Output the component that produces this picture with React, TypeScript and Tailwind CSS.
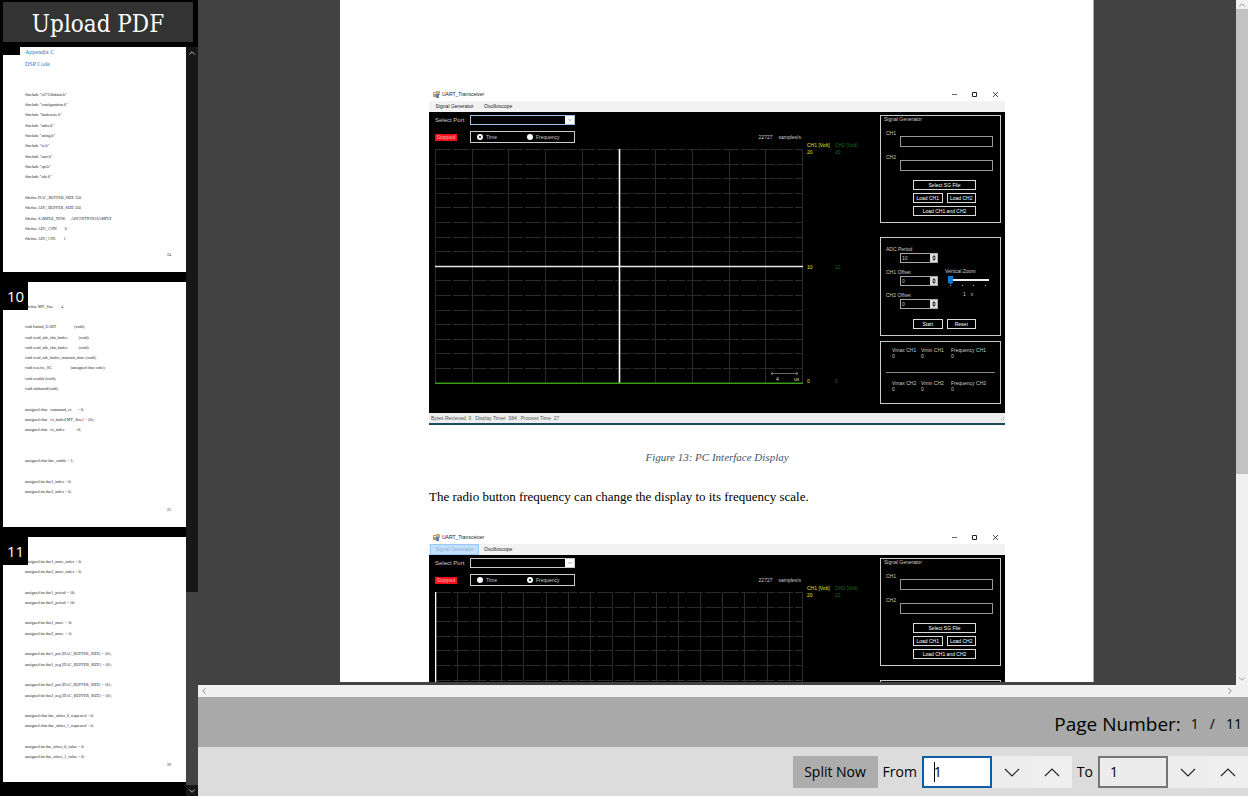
import { useId } from "react";
import { ChevronDown, ChevronUp, ChevronLeft, ChevronRight } from "lucide-react";

const page9 = [
  '#include "c6713dskinit.h"',
  '#include "configuration.h"',
  '#include "buffersize.h"',
  '#include "stdio.h"',
  '#include "string.h"',
  '#include "io.h"',
  '#include "uart.h"',
  '#include "spi.h"',
  '#include "adc.h"',
  "",
  "#define DAC_BUFFER_SIZE 350",
  "#define ADC_BUFFER_SIZE 350",
  "#define SAMPLE_NOW      ADCOPTION1SAMPLY",
  "#define ADC_CHN        0",
  "#define ADC_CH1        1",
];

const page10 = [
  "#define MY_Size        4",
  "",
  "void Initiad_UART                  (void);",
  "void send_adc_chn_buffer           (void);",
  "void send_adc_chn_buffer           (void);",
  "void send_adc_buffer_transmit_done (void);",
  "void receive_SG                   (unsigned char code);",
  "void sendch (void);",
  "void initboard(void);",
  "",
  "unsigned char   command_rx      = 0;",
  "unsigned char   rx_buffer[MY_Size] = {0};",
  "unsigned char   rx_index           =0;",
  "",
  "",
  "unsigned char dac_enable = 1;",
  "",
  "unsigned int dac1_index = 0;",
  "unsigned int dac2_index = 0;",
  "",
];

const page11 = [
  "unsigned int dac1_more_index = 0;",
  "unsigned int dac2_more_index = 0;",
  "",
  "unsigned int dac1_period = 10;",
  "unsigned int dac2_period = 10;",
  "",
  "unsigned int dac1_more  = 0;",
  "unsigned int dac2_more  = 0;",
  "",
  "unsigned int dac1_pos [DAC_BUFFER_SIZE] = {0};",
  "unsigned int dac1_neg [DAC_BUFFER_SIZE] = {0};",
  "",
  "unsigned int dac2_pos [DAC_BUFFER_SIZE] = {0};",
  "unsigned int dac2_neg [DAC_BUFFER_SIZE] = {0};",
  "",
  "unsigned char dac_offset_0_requested = 0;",
  "unsigned char dac_offset_1_requested = 0;",
  "",
  "unsigned int dac_offset_0_value = 0;",
  "unsigned int dac_offset_1_value = 0;",
];

const ui = "font-['Open_Sans','Noto_Sans',sans-serif]";

function CodeLines({ lines }: { lines: string[] }) {
  return (
    <>
      {lines.map((line, i) => (
        <div key={i} className="flex items-center whitespace-pre">
          {line}
        </div>
      ))}
    </>
  );
}

function Thumbnail({ number, lines, footer }: { number: number; lines: string[]; footer: string }) {
  const first = number === 9;
  return (
    <li className="relative flex h-[245px] flex-col bg-white font-['Liberation_Sans_Narrow','Liberation_Serif',serif] text-[4px] leading-[5px] text-[#222]">
      <span className={`absolute left-0 top-0 flex h-7 items-center bg-black px-1 text-[15px] text-white ${ui}`}>
        {number}
      </span>
      {first ? (
        <>
          <div className="ml-[22px] mt-[22px] text-[6px] leading-[6px] text-[#2e74b5]">Appendix C</div>
          <div className="ml-[22px] mt-[6px] text-[6px] leading-[6px] text-[#2e74b5]">DSP Code</div>
          <div className="ml-[22px] mt-[22px] grid h-[155px] auto-rows-fr">
            <CodeLines lines={lines} />
          </div>
        </>
      ) : (
        <div className="ml-[22px] mt-[19px] grid h-[206px] auto-rows-fr">
          <CodeLines lines={lines} />
        </div>
      )}
      <div className="absolute bottom-[15px] right-[15px]">{footer}</div>
    </li>
  );
}

function Sidebar() {
  return (
    <aside className="flex w-[198px] shrink-0 flex-col bg-black">
      <button className="ml-[3px] mr-[5px] mt-[2px] h-10 bg-[#333] pt-1 font-['DejaVu_Serif_Condensed','DejaVu_Serif',serif] text-[24px] leading-none text-white">
        Upload PDF
      </button>
      <div className="mt-[5px] flex min-h-0 flex-1">
        <div className="min-h-0 flex-1 overflow-hidden pl-[3px]">
          <ul className="-mt-5 flex flex-col gap-[10px]">
            <Thumbnail number={9} lines={page9} footer="24" />
            <Thumbnail number={10} lines={page10} footer="25" />
            <Thumbnail number={11} lines={page11} footer="26" />
          </ul>
        </div>
        <div className="flex w-3 flex-col bg-[#171717] text-[#ddd]">
          <button aria-label="Scroll thumbnails up" className="flex h-3 items-center justify-center">
            <ChevronUp size={10} />
          </button>
          <div className="flex-1" />
          <div className="h-[193px] bg-[#434343]" />
          <button aria-label="Scroll thumbnails down" className="flex h-[11px] items-center justify-center">
            <ChevronDown size={10} />
          </button>
        </div>
      </div>
    </aside>
  );
}

function Graph({ frequency }: { frequency: boolean }) {
  const step = frequency ? 22.1 : 36.7;
  const columns = frequency ? 17 : 10;
  const xs = Array.from({ length: columns }, (_, i) => Math.round(i * step) + 0.5);
  const ys = Array.from({ length: 16 }, (_, i) => Math.round(i * 14.6) + 0.5);
  return (
    <svg className="mt-[6px] block h-[235px] w-full" viewBox="0 0 368 235" preserveAspectRatio="none">
      <g stroke="#2b2b2b" fill="none">
        {xs.map((x) => (
          <path key={x} d={`M${x} 0V234`} />
        ))}
        <path d="M367.5 0V234" />
      </g>
      <g stroke="#2b2b2b" fill="none" strokeDasharray="16 2">
        {ys.map((y) => (
          <path key={y} d={`M0 ${y}H368`} />
        ))}
      </g>
      {!frequency && <path d="M0 117.5H368" stroke="#e8e8e8" strokeWidth="1.4" />}
      <path d={frequency ? "M0.5 0V234" : "M184.5 0V234"} stroke="#fff" strokeWidth="1.6" />
      <path d="M0 234.3H368" stroke="#3f9a1c" strokeWidth="1.4" />
      <g stroke="#aaa" strokeWidth=".6" fill="none">
        <path d="M336 224.5H363M338 223L336 224.5L338 226M361 223L363 224.5L361 226" />
      </g>
      <g fill="#ddd" fontSize="5" fontFamily="Liberation Sans, sans-serif">
        <text x="341" y="232">4</text>
        <text x="359" y="232">us</text>
      </g>
    </svg>
  );
}

function VoltScale({ name, className }: { name: string; className: string }) {
  return (
    <div className={`w-7 leading-[7px] ${className}`}>
      <div className="whitespace-nowrap">{name} [Volt]</div>
      <div className="flex h-[236px] flex-col justify-between">
        <span>20</span>
        <span>10</span>
        <span>0</span>
      </div>
    </div>
  );
}

function FileField({ label, className }: { label: string; className: string }) {
  const id = useId();
  return (
    <div className={`flex flex-col ${className}`}>
      <label htmlFor={id} className="ml-[5px] h-[6px] leading-[6px]">
        {label}
      </label>
      <input id={id} className="ml-[19px] mr-[7px] h-[11px] border border-[#999] bg-black px-px" />
    </div>
  );
}

function Spinner({ label, value }: { label: string; value: string }) {
  const id = useId();
  return (
    <div className="flex h-[17px] flex-col">
      <label htmlFor={id} className="h-[7px] whitespace-nowrap leading-[6px]">
        {label}
      </label>
      <div className="ml-[14px] flex h-[10px] w-[38px] border border-[#aaa]">
        <input id={id} defaultValue={value} className="w-full min-w-0 bg-black pl-px text-[5px] leading-none" />
        <div className="flex w-[7px] shrink-0 flex-col items-center justify-center bg-[#ddd]">
          <svg className="h-[6px] w-1" viewBox="0 0 4 6">
            <path d="M0 2.4L2 0L4 2.4ZM0 3.6L2 6L4 3.6Z" fill="#333" />
          </svg>
        </div>
      </div>
    </div>
  );
}

const toolButton = "h-[10px] border border-[#ddd] text-[5px] leading-none whitespace-nowrap";

function ControlPanels() {
  const zoomId = useId();
  return (
    <div className="flex w-[121px] shrink-0 flex-col text-[#ccc]">
      <section className="flex h-[108px] flex-col border border-[#ccc]">
        <h3 className="ml-[3px] leading-[7px]">Signal Generator</h3>
        <FileField label="CH1" className="mt-[7px]" />
        <FileField label="CH2" className="mt-[7px]" />
        <div className="ml-8 mt-[9px] grid w-[63px] grid-cols-2 gap-x-1 gap-y-[3px] text-white">
          <button className={`col-span-2 ${toolButton}`}>Select SG File</button>
          <button className={toolButton}>Load CH1</button>
          <button className={toolButton}>Load CH2</button>
          <button className={`col-span-2 ${toolButton}`}>Load CH1 and CH2</button>
        </div>
      </section>
      <section className="mt-[14px] flex h-[99px] flex-col border border-[#ccc]">
        <div className="ml-[5px] mt-2 flex">
          <div className="flex w-[59px] flex-col gap-[6px]">
            <Spinner label="ADC Period" value="10" />
            <Spinner label="CH1 Offset" value="0" />
            <Spinner label="CH2 Offset" value="0" />
          </div>
          <div className="flex flex-col pt-[22px]">
            <label htmlFor={zoomId} className="leading-[7px]">
              Vertical Zoom
            </label>
            <input
              id={zoomId}
              type="range"
              min="1"
              max="4"
              defaultValue="1"
              className="ml-[3px] mt-px h-2 w-[41px] appearance-none bg-[linear-gradient(#eee,#eee)] bg-[length:100%_2px] bg-center bg-no-repeat [&::-webkit-slider-thumb]:h-2 [&::-webkit-slider-thumb]:w-[5px] [&::-webkit-slider-thumb]:appearance-none [&::-webkit-slider-thumb]:rounded-b-sm [&::-webkit-slider-thumb]:bg-[#0a7ad8]"
            />
            <div className="ml-[5px] mt-px flex w-9 justify-between">
              <i className="h-px w-px bg-[#999]" />
              <i className="h-px w-px bg-[#999]" />
              <i className="h-px w-px bg-[#999]" />
              <i className="h-px w-px bg-[#999]" />
            </div>
            <div className="ml-[18px] mt-[5px] flex gap-[5px] leading-[7px]">
              <span>1</span>
              <span>x</span>
            </div>
          </div>
        </div>
        <div className="ml-8 mt-auto mb-[6px] grid w-[63px] grid-cols-2 gap-x-1 text-white">
          <button className={toolButton}>Start</button>
          <button className={toolButton}>Reset</button>
        </div>
      </section>
      <section className="mt-[5px] flex h-[63px] flex-col justify-between border border-[#ccc] px-[5px] pb-[11px] pt-[5px] leading-[6px]">
        <Measures channel="CH1" />
        <hr className="mt-[6px] border-[#888]" />
        <Measures channel="CH2" />
      </section>
    </div>
  );
}

function Measures({ channel }: { channel: string }) {
  return (
    <dl className="grid grid-cols-[29px_30px_1fr] whitespace-nowrap pl-[6px]">
      {["Vmax", "Vmin", "Frequency"].map((name) => (
        <div key={name}>
          <dt>
            {name} {channel}
          </dt>
          <dd>0</dd>
        </div>
      ))}
    </dl>
  );
}

function Transceiver({ frequency = false }: { frequency?: boolean }) {
  const id = useId();
  const radio =
    "size-[6px] appearance-none rounded-full bg-white checked:border-2 checked:border-white checked:bg-black";
  return (
    <figure className="font-['Liberation_Sans',sans-serif] text-[5px] leading-[7px]">
      <div className="flex h-[13px] items-center bg-white pb-px pl-1 pr-[6px] text-[#222]">
        <svg className="mr-[2px] h-[7px] w-[7px]" viewBox="0 0 7 7">
          <path d="M0 1H4V6H0Z" fill="#d9904a" />
          <path d="M3 0H7V4H3Z" fill="#c9b072" />
          <path d="M3 3H6V7H3Z" fill="#5b82bd" />
          <path d="M1 2H3V3H1Z" fill="#fff" />
        </svg>
        <span>UART_Transceiver</span>
        <svg className="ml-auto h-[7px] w-[47px]" viewBox="0 0 47 7" fill="none" stroke="#222">
          <path d="M0 3.5H5" strokeWidth=".7" />
          <path d="M20.5 1.5H24.5V5.5H20.5Z" />
          <path d="M41 1L46 6M46 1L41 6" strokeWidth=".8" />
        </svg>
      </div>
      <div className="flex h-[11px] items-center bg-[#f2f2f2] pl-px text-[#222]">
        <span
          className={`flex w-[49px] justify-center ${
            frequency ? "border border-[#9ac8f4] bg-[#c2e0fb] py-px text-[#8fb0d0]" : ""
          }`}
        >
          Signal Generator
        </span>
        <span className="ml-[5px]">Oscilloscope</span>
      </div>
      <div className="flex h-[301px] bg-black pl-[6px] pr-1 pt-[3px]">
        <div className="flex min-w-0 flex-1 flex-col text-[#ccc]">
          <div className="flex h-[10px] items-center">
            <label htmlFor={id + "port"} className="w-[35px] whitespace-nowrap text-[6px]">
              Select Port
            </label>
            <div className={`flex h-full w-[105px] border ${frequency ? "border-[#ccc]" : "border-[#a4c3e8]"}`}>
              <select id={id + "port"} className="min-w-0 flex-1 appearance-none bg-black">
                <option></option>
              </select>
              <span className="flex w-[9px] items-center justify-center bg-white">
                <ChevronDown size={6} className="text-[#555]" />
              </span>
            </div>
          </div>
          <div className="mt-[6px] flex h-3 items-center">
            <span className="mr-[13px] flex h-[7px] w-[22px] items-center justify-center bg-[#f3101c] text-[#ffb0a8]">
              Stopped
            </span>
            <div className="flex h-full w-[105px] items-center border border-[#ccc] pl-[6px]">
              <label className="flex w-[50px] items-center gap-[3px]">
                <input type="radio" name={id + "mode"} defaultChecked={!frequency} className={radio} />
                Time
              </label>
              <label className="flex items-center gap-[3px]">
                <input type="radio" name={id + "mode"} defaultChecked={frequency} className={radio} />
                Frequency
              </label>
            </div>
            <span className="ml-auto mr-[6px]">22727</span>
            <span className="mr-[2px]">samples/s</span>
          </div>
          <Graph frequency={frequency} />
        </div>
        <div className="flex w-[77px] shrink-0 pl-1 pt-[27px]">
          <VoltScale name="CH1" className="text-[#e6e020]" />
          <VoltScale name="CH2" className="text-[#16701c]" />
        </div>
        <ControlPanels />
      </div>
      <div className="flex h-3 items-center gap-1 whitespace-pre border-b-2 border-[#1d4a63] bg-[#eee] pl-[2px] text-[#555]">
        <span>Bytes Recieved  0</span>
        <span>Display Timer  384</span>
        <span>Process Time  27</span>
        <svg className="ml-auto h-1 w-1" viewBox="0 0 4 4" fill="#aaa">
          <path d="M0 3H1V4H0ZM2 3H3V4H2ZM2 1H3V2H2Z" />
        </svg>
      </div>
    </figure>
  );
}

function DocumentView() {
  return (
    <main className="flex min-h-0 flex-1">
      <div className="flex min-w-0 flex-1 flex-col">
        <div className="flex min-h-0 flex-1 justify-center bg-[#424242] pb-[3px]">
          <article className="w-[754px] overflow-hidden border-r border-[#aaa] bg-white px-[88px] pt-[88px] font-['Liberation_Serif',serif]">
            <div className="pl-px">
              <Transceiver />
              <p className="mt-6 text-center text-[11px] italic leading-4 text-[#44546a]">
                Figure 13: PC Interface Display
              </p>
              <p className="mt-[22px] text-[13px] leading-5 text-black">
                The radio button frequency can change the display to its frequency scale.
              </p>
              <div className="mt-6">
                <Transceiver frequency />
              </div>
            </div>
          </article>
        </div>
        <div className="flex h-3 items-center justify-between bg-[#f0f0f0] text-[#777]">
          <button aria-label="Scroll left" className="flex w-3 justify-center">
            <ChevronLeft size={10} />
          </button>
          <button aria-label="Scroll right" className="flex w-3 justify-center">
            <ChevronRight size={10} />
          </button>
        </div>
      </div>
      <div className="flex w-3 shrink-0 flex-col bg-[#f0f0f0] pb-3 text-[#888]">
        <button aria-label="Scroll up" className="flex h-[9px] items-center justify-center">
          <ChevronUp size={10} />
        </button>
        <div className="h-[465px] bg-[#c2c2c2]" />
        <div className="flex-1" />
        <button aria-label="Scroll down" className="flex h-3 items-center justify-center">
          <ChevronDown size={10} />
        </button>
      </div>
    </main>
  );
}

function RangeField({ label, active = false }: { label: string; active?: boolean }) {
  const id = useId();
  return (
    <div className="flex items-center">
      <label htmlFor={id} className="mx-[5px]">
        {label}
      </label>
      <div className="relative">
        <input
          id={id}
          defaultValue="1"
          inputMode="numeric"
          className={`block h-8 w-[70px] border-2 pl-[10px] outline-none ${
            active ? "border-[#0a5fa6] bg-white" : "border-[#767676] bg-[#ececec]"
          }`}
        />
        {active && <span className="absolute left-3 top-[6px] h-5 w-px bg-black" />}
      </div>
      <button aria-label={`Decrease ${label}`} className="flex h-8 w-10 items-center justify-center bg-[#ededed]">
        <ChevronGlyph d="M1 5L8 12L15 5" />
      </button>
      <button aria-label={`Increase ${label}`} className="flex h-8 w-10 items-center justify-center bg-[#efefef]">
        <ChevronGlyph d="M1 12L8 5L15 12" />
      </button>
    </div>
  );
}

function ChevronGlyph({ d }: { d: string }) {
  return (
    <svg className="size-4" viewBox="0 0 16 16" fill="none" stroke="#222" strokeWidth="1.1">
      <path d={d} />
    </svg>
  );
}

export default function App() {
  return (
    <div className={`flex h-screen overflow-hidden text-black ${ui}`}>
      <Sidebar />
      <div className="flex min-w-0 flex-1 flex-col">
        <DocumentView />
        <div className="flex h-[50px] shrink-0 items-center justify-end bg-[#a9a9a9] pr-[6px] pt-1">
          <span className="mr-[10px] text-[19px]">Page Number:</span>
          <span className="flex gap-[11px] pb-[2px] text-[14px]">
            <span>1</span>
            <span>/</span>
            <span>11</span>
          </span>
        </div>
        <form
          onSubmit={(e) => e.preventDefault()}
          className="flex h-[49px] shrink-0 items-center justify-end bg-[#dcdcdc] text-[14px]"
        >
          <button className="h-8 w-[85px] bg-[#adadad]">Split Now</button>
          <RangeField label="From" active />
          <RangeField label="To" />
        </form>
      </div>
    </div>
  );
}
